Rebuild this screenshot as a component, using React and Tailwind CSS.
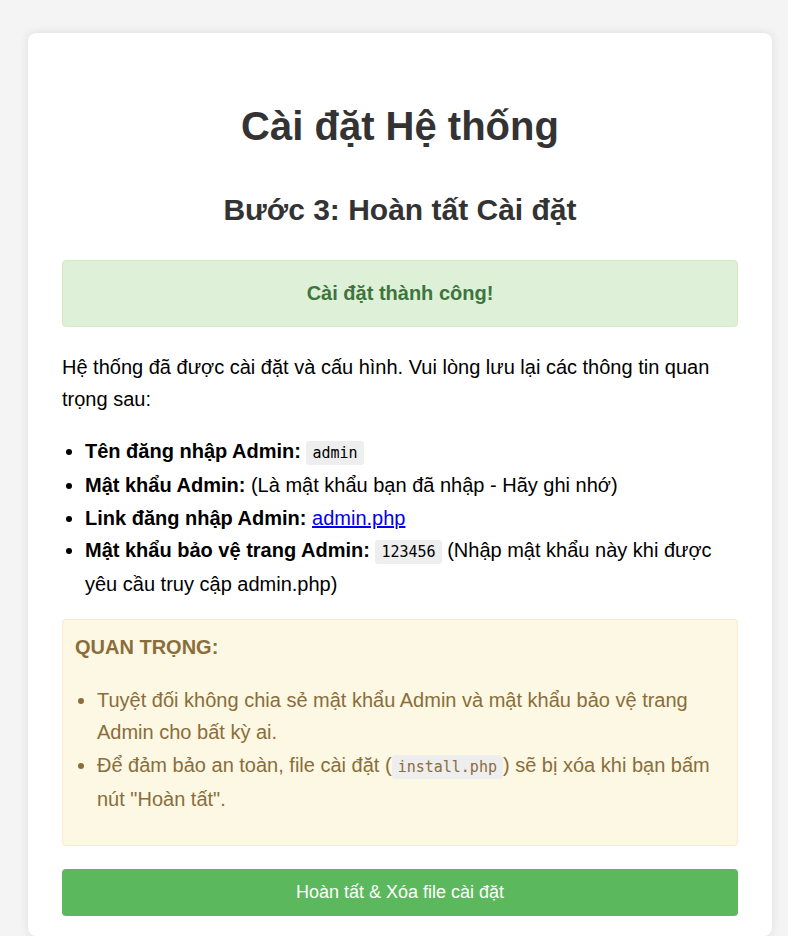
export default function App() {
  const code = 'rounded-[3px] bg-[#eeeeee] px-[6px] py-[3px] text-[15px] font-["DejaVu_Sans_Mono",monospace]'

  return (
    <div className="min-h-screen bg-[#f4f4f4] pl-[28px] pr-[16px] pt-[33px] font-['Liberation_Sans',Arial,sans-serif] text-black">
      <div className="rounded-lg bg-white px-[34px] pb-[20px] shadow-[0_0_10px_rgba(0,0,0,0.1)]">
        {/* HEADINGS */}
        <h1 className="pt-[69px] text-center text-[40px] font-bold leading-[48px] text-[#333333]">
          Cài đặt Hệ thống
        </h1>
        <h2 className="mt-[44px] text-center text-[30px] font-bold leading-[32px] text-[#333333]">
          Bước 3: Hoàn tất Cài đặt
        </h2>

        {/* SUCCESS */}
        <div className="mt-[34px] rounded-[4px] border border-[#d6e9c6] bg-[#dff0d8] py-4 text-center text-[20px] font-bold leading-[33px] text-[#3c763d]">
          Cài đặt thành công!
        </div>

        <p className="mt-[24px] text-[20px] leading-[32.4px]">
          Hệ thống đã được cài đặt và cấu hình. Vui lòng lưu lại các thông tin quan trọng sau:
        </p>

        <ul className="mt-[19px] list-disc pl-[23px] text-[20px] leading-[32.4px]">
          <li>
            <strong>Tên đăng nhập Admin:</strong> <code className={code}>admin</code>
          </li>
          <li>
            <strong>Mật khẩu Admin:</strong> (Là mật khẩu bạn đã nhập - Hãy ghi nhớ)
          </li>
          <li>
            <strong>Link đăng nhập Admin:</strong>{' '}
            <a href="#" className="text-[#0000ee] underline">admin.php</a>
          </li>
          <li>
            <strong>Mật khẩu bảo vệ trang Admin:</strong> <code className={code}>123456</code> (Nhập mật khẩu này khi được yêu cầu truy cập admin.php)
          </li>
        </ul>

        {/* WARNING */}
        <div className="mt-[18px] rounded-[4px] border border-[#faebcc] bg-[#fcf8e3] px-3 pt-[16px] pb-[30px] text-[20px] text-[#8a6d3b]">
          <h4 className="font-bold leading-[22px]">QUAN TRỌNG:</h4>
          <ul className="mt-[26px] list-disc pl-[22px] leading-[32.4px]">
            <li>Tuyệt đối không chia sẻ mật khẩu Admin và mật khẩu bảo vệ trang Admin cho bất kỳ ai.</li>
            <li>
              Để đảm bảo an toàn, file cài đặt (<code className={code}>install.php</code>) sẽ bị xóa khi bạn bấm nút "Hoàn tất".
            </li>
          </ul>
        </div>

        {/* BUTTON */}
        <button className="mt-[23px] flex h-[47px] w-full items-center justify-center rounded-[4px] bg-[#5cb85c] text-[18px] text-white">
          Hoàn tất &amp; Xóa file cài đặt
        </button>
      </div>
    </div>
  )
}
